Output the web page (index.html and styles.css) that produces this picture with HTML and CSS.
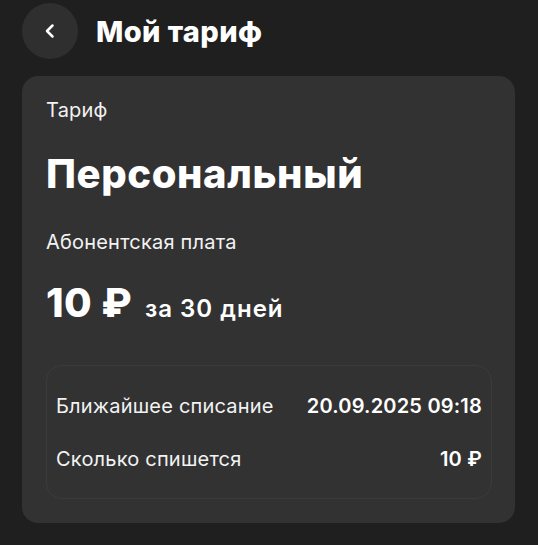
FILE: index.html
```html
<!DOCTYPE HTML>
<html lang="ru">
<head>
	<meta charset="UTF-8" />
	<title>Мой тариф</title>
	<link rel="stylesheet" href="styles.css">
</head>
<body>

	<header class="top">
		<button class="back" type="button" aria-label="Назад">
			<svg width="16" height="16" viewBox="0 0 16 16">
				<path d="M10.5 2.5 L5 8 L10.5 13.5" fill="none" stroke="#fff" stroke-width="2.5" stroke-linecap="round" stroke-linejoin="round" />
			</svg>
		</button>
		<h1 class="title">Мой тариф</h1>
	</header>

	<section class="card">
		<div class="label">Тариф</div>
		<div class="plan">Персональный</div>

		<div class="label fee">Абонентская плата</div>
		<div class="price">
			<span class="amount">10 ₽</span>
			<span class="period">за 30 дней</span>
		</div>

		<div class="details">
			<div class="row">
				<span>Ближайшее списание</span>
				<span class="value">20.09.2025 09:18</span>
			</div>
			<div class="row">
				<span>Сколько спишется</span>
				<span class="value">10 ₽</span>
			</div>
		</div>
	</section>

</body>
</html>
```

FILE: styles.css
```css
* {
	margin: 0;
	padding: 0;
	box-sizing: border-box;
}
body {
	background-color: #1f1f1f;
	color: #fff;
	font-family: Inter, "Noto Sans", sans-serif;
	padding: 3px 23px 0 22px;
}
.top {
	display: flex;
	align-items: center;
	gap: 18px;
	height: 56px;
}
.back {
	width: 56px;
	height: 56px;
	border: 0;
	border-radius: 50%;
	background-color: #2f2f2f;
	display: flex;
	align-items: center;
	justify-content: center;
}
.title {
	font-size: 29px;
	font-weight: 800;
	letter-spacing: 0.4px;
}
.card {
	margin-top: 17px;
	background-color: #323232;
	border-radius: 16px;
	padding: 22px 23px 24px 24px;
}
.label {
	font-size: 20px;
	line-height: 24px;
	letter-spacing: 0.2px;
	color: #f2f2f2;
}
.plan {
	margin-top: 28px;
	font-size: 40px;
	line-height: 48px;
	font-weight: 800;
	letter-spacing: 0.6px;
}
.fee {
	margin-top: 32px;
}
.price {
	margin-top: 27px;
	display: flex;
	align-items: baseline;
	gap: 13px;
}
.amount {
	font-size: 40px;
	line-height: 44px;
	font-weight: 800;
	letter-spacing: 0.4px;
}
.period {
	font-size: 24px;
	font-weight: 600;
	letter-spacing: 1px;
}
.details {
	margin-top: 40px;
	border: 1px solid #3b3b3b;
	border-radius: 16px;
	padding: 28px 9px 27px 9px;
	display: flex;
	flex-direction: column;
	gap: 29px;
}
.row {
	display: flex;
	justify-content: space-between;
	font-size: 20px;
	line-height: 24px;
	letter-spacing: 0.2px;
	color: #f2f2f2;
}
.value {
	font-weight: 600;
	color: #fff;
}
```
